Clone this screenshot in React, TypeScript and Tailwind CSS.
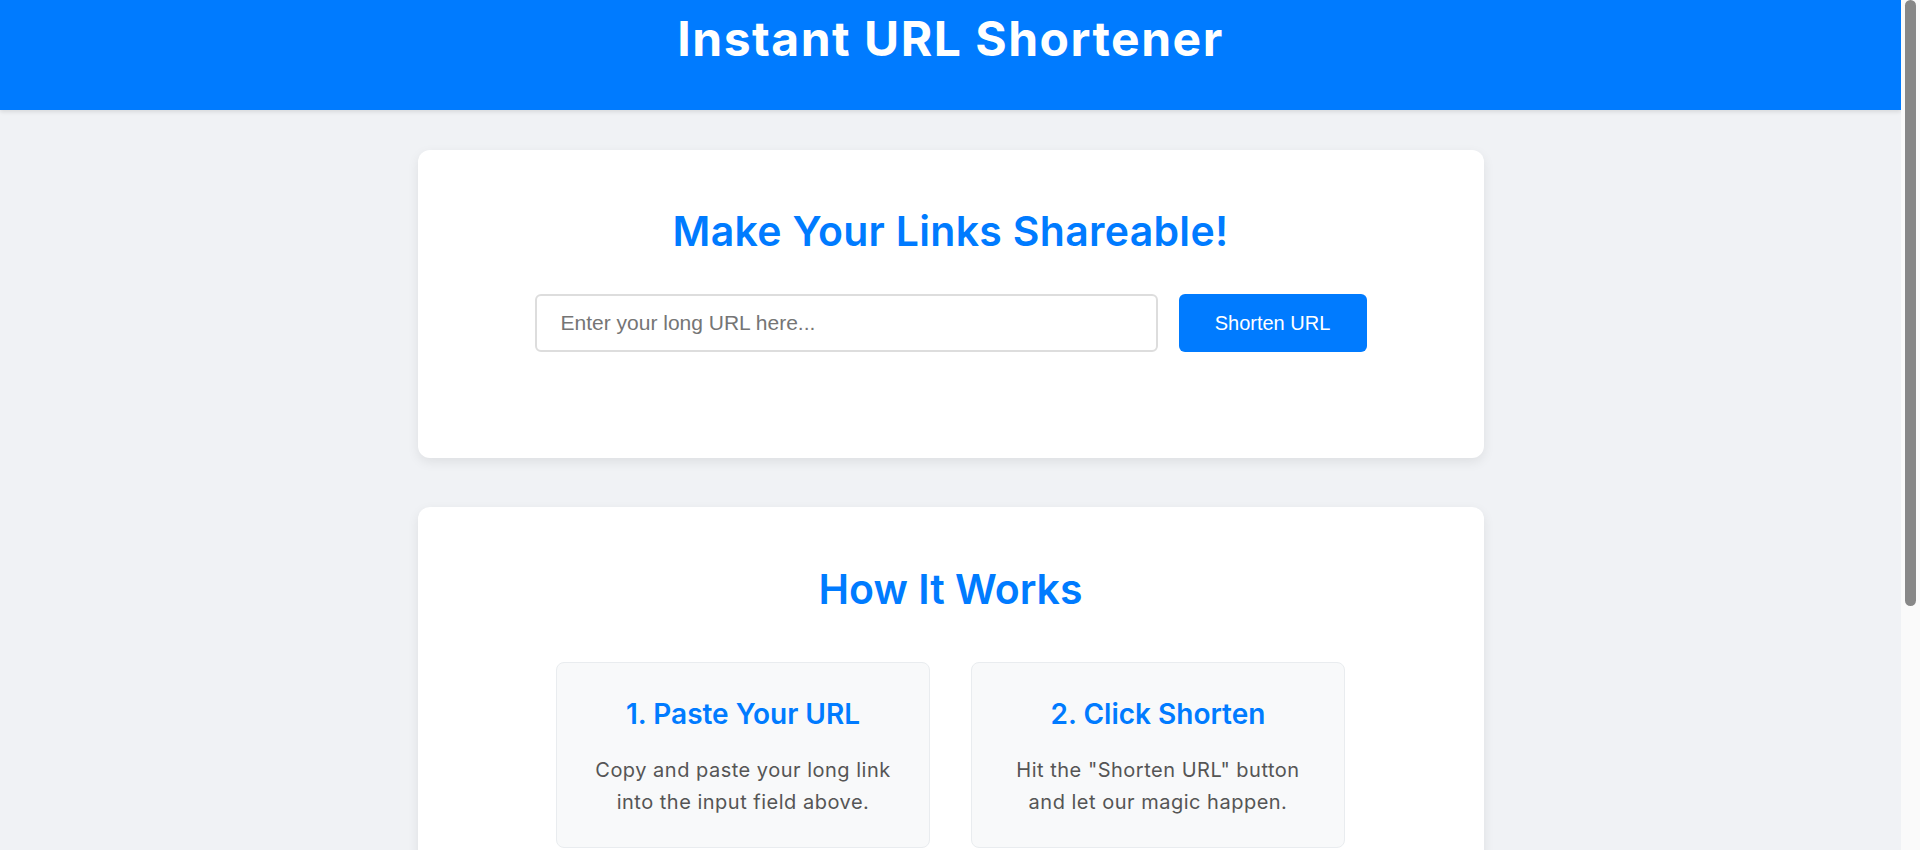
const steps = [
  { title: "1. Paste Your URL", lines: ["Copy and paste your long link", "into the input field above."] },
  { title: "2. Click Shorten", lines: ['Hit the "Shorten URL" button', "and let our magic happen."] },
];

function StepCard({ title, lines }: { title: string; lines: string[] }) {
  return (
    <div className="flex h-[186px] flex-col items-center rounded-[8px] border border-[#e9ecef] bg-[#f8f9fa] px-[20px] pt-[34px] text-center">
      <h3 className="text-[28px] leading-[34px] font-semibold text-[#007bff]">{title}</h3>
      <p className="mt-[23px] text-[20px] leading-[32px] tracking-[0.5px] whitespace-nowrap text-[#555]">
        {lines[0]}
        <br />
        {lines[1]}
      </p>
    </div>
  );
}

// page scrollbar as it shows in the shot
function ScrollTrack() {
  return (
    <div className="w-[19px] shrink-0 bg-[#fafafa]">
      <div className="ml-[4px] h-[606px] w-[11px] rounded-full bg-[#888]" />
    </div>
  );
}

export default function App() {
  return (
    <div className="flex h-screen overflow-hidden bg-[#f0f2f5] font-['Inter',sans-serif]">
      <div className="min-w-0 flex-1">
        <header className="h-[110px] bg-[#007bff] pt-[16px] text-center shadow-[0_2px_4px_rgba(0,0,0,0.1)]">
          <h1 className="text-[48px] leading-[46px] font-bold tracking-[1.5px] text-white">Instant URL Shortener</h1>
        </header>

        <main className="flex flex-col items-center pt-[40px] pb-[57px]">
          <section className="flex h-[308px] w-[1066px] flex-col items-center rounded-[12px] bg-white pt-[57px] shadow-[0_4px_12px_rgba(0,0,0,0.08)]">
            <h2 className="text-[41px] leading-[49px] font-semibold tracking-[0.3px] text-[#007bff]">Make Your Links Shareable!</h2>
            <form className="mt-[38px] flex gap-[21px]" onSubmit={(e) => e.preventDefault()}>
              <input
                type="text"
                placeholder="Enter your long URL here..."
                className="h-[58px] w-[623px] rounded-[6px] border-2 border-[#ddd] bg-white pl-[24px] font-['Liberation_Sans',Arial,sans-serif] text-[21px] text-[#333] outline-none placeholder:text-[#757575]"
              />
              <button
                type="submit"
                className="h-[58px] w-[188px] rounded-[6px] bg-[#007bff] font-['Liberation_Sans',Arial,sans-serif] text-[20px] text-white"
              >
                Shorten URL
              </button>
            </form>
          </section>

          <section className="mt-[49px] flex w-[1066px] flex-col items-center rounded-[12px] bg-white pt-[58px] pb-[58px] shadow-[0_4px_12px_rgba(0,0,0,0.08)]">
            <h2 className="text-[41px] leading-[49px] font-semibold text-[#007bff]">How It Works</h2>
            <div className="mt-[48px] grid grid-cols-[374px_374px] gap-[41px]">
              {steps.map((s) => (
                <StepCard key={s.title} title={s.title} lines={s.lines} />
              ))}
            </div>
          </section>
        </main>
      </div>
      <ScrollTrack />
    </div>
  );
}
